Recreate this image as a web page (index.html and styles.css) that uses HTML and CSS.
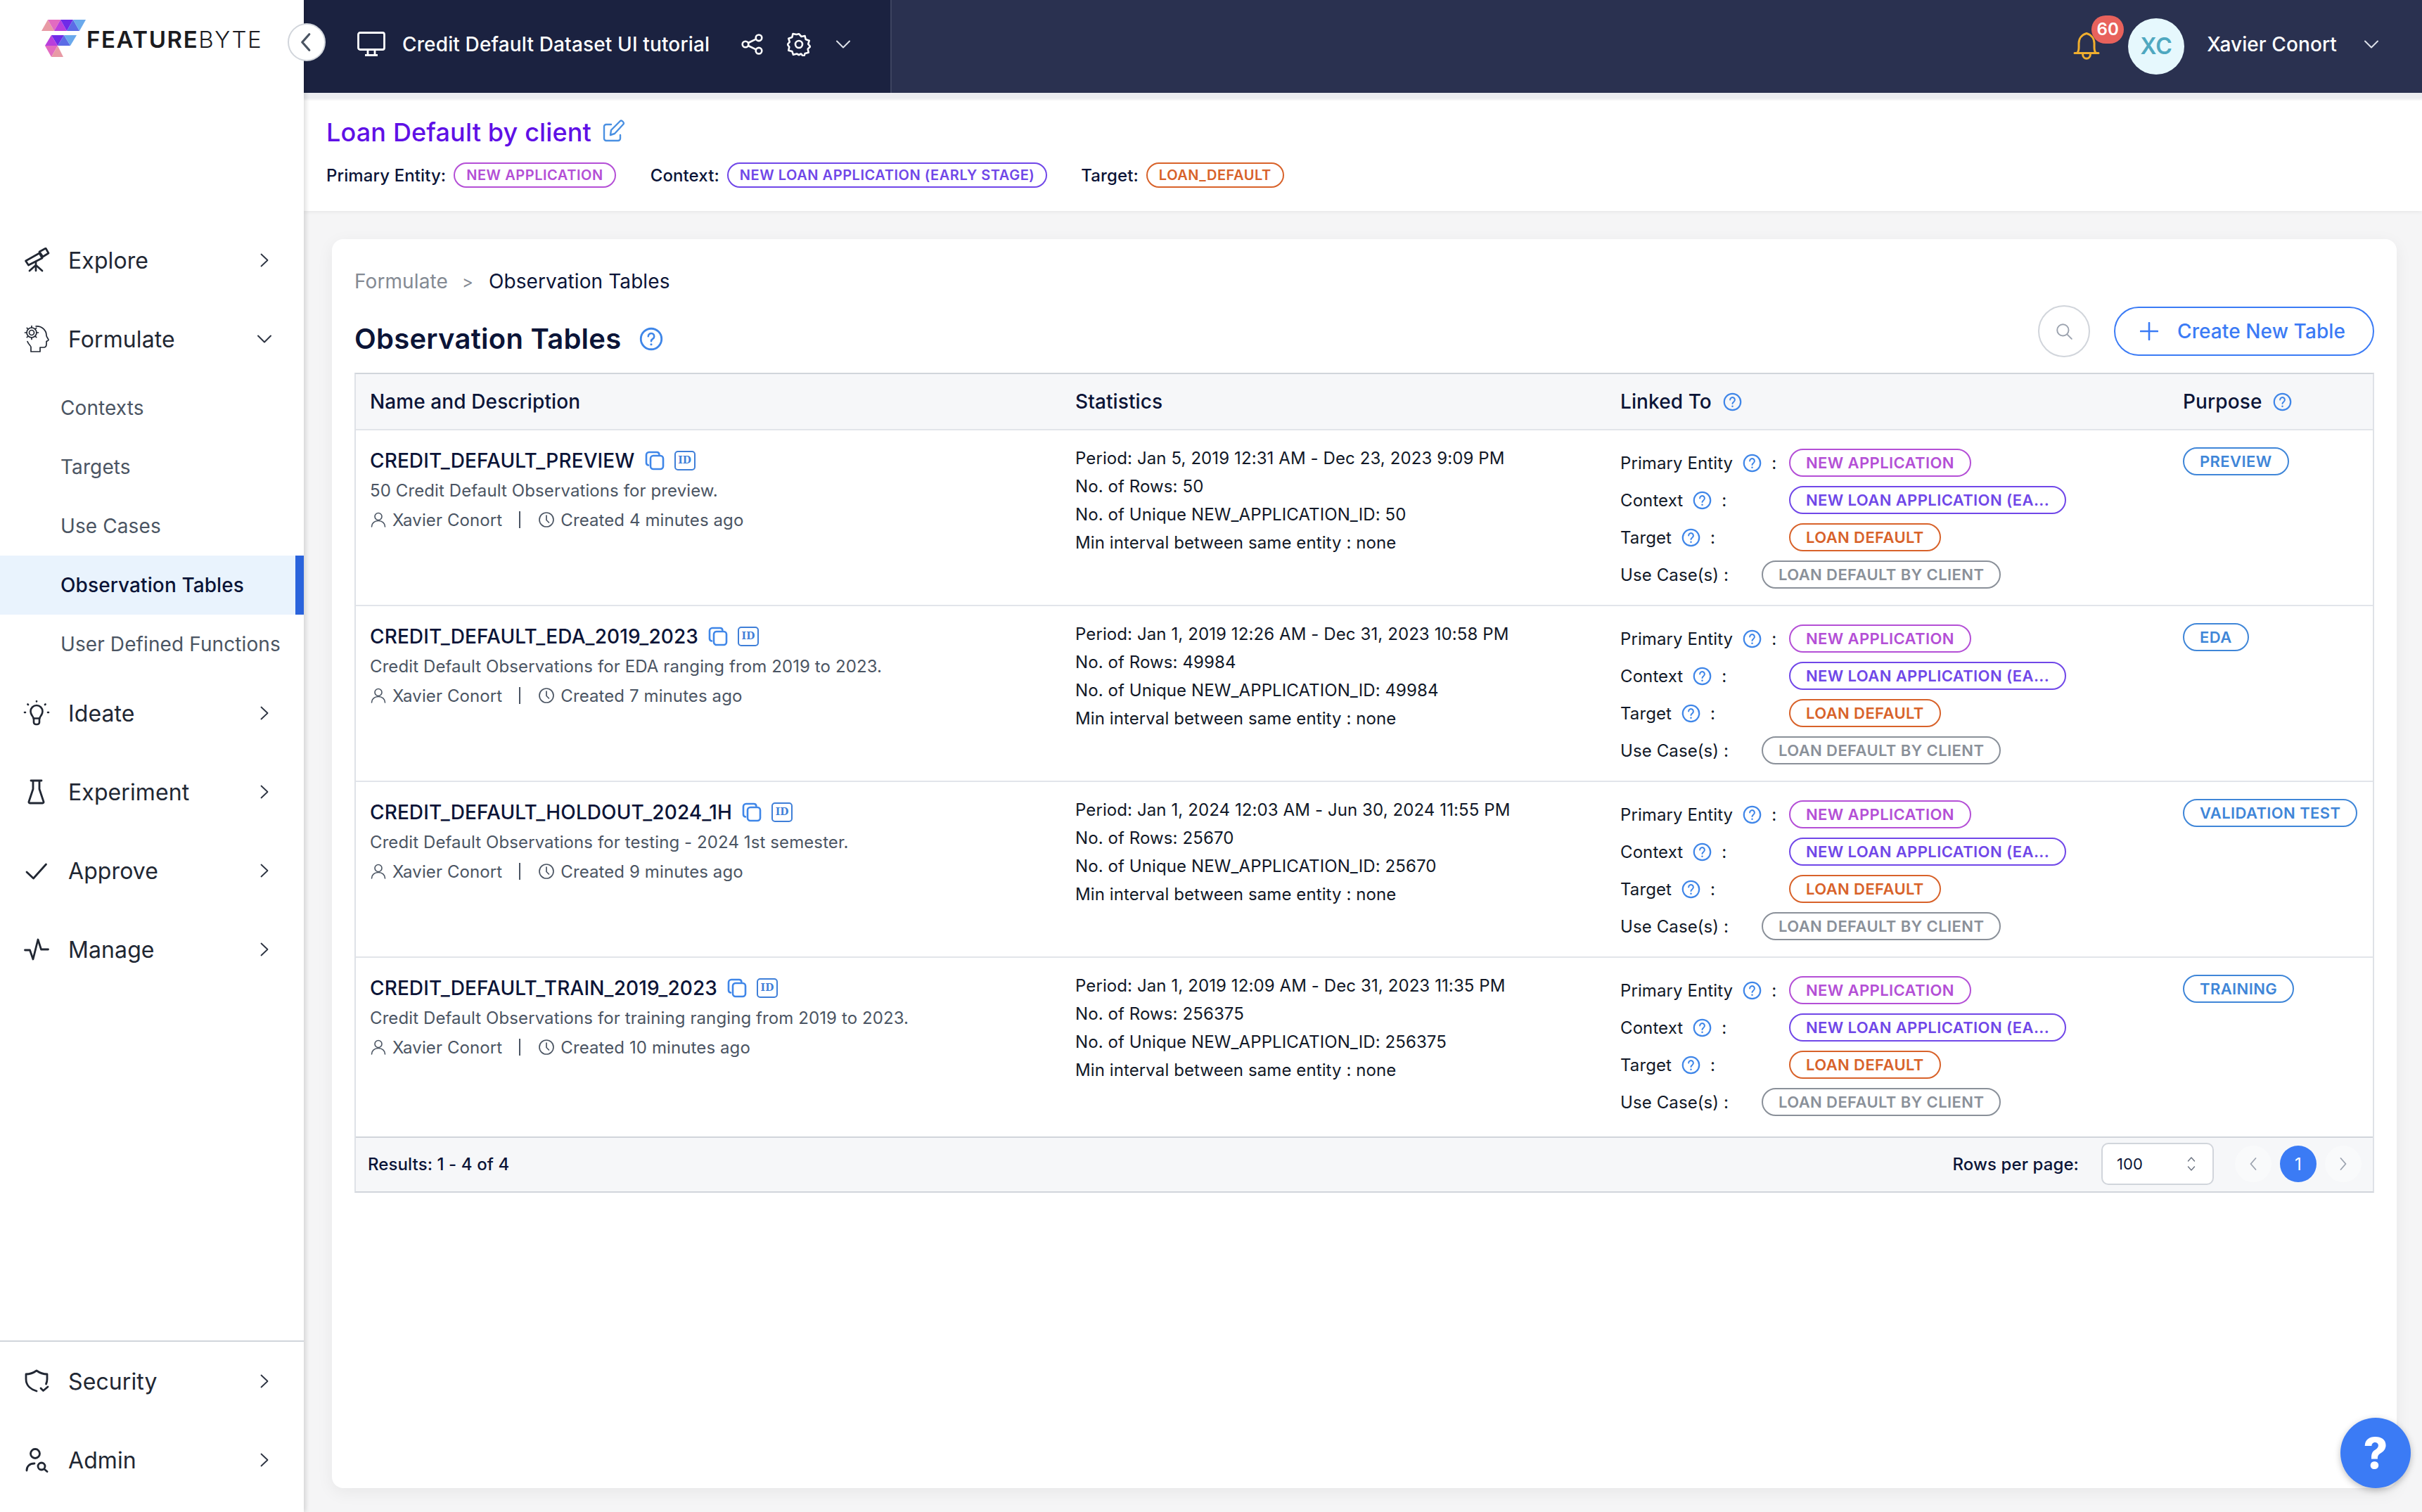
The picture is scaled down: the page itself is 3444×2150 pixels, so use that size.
FILE: index.html
```html
<!DOCTYPE html>
<html lang="en">
<head>
<meta charset="utf-8">
<title>Observation Tables</title>
<link rel="stylesheet" href="styles.css">
</head>
<body>
<svg class="defs" width="0" height="0" aria-hidden="true">
  <symbol id="help" viewBox="0 0 24 24"><circle cx="12" cy="12" r="10.400" fill="none" stroke="currentColor" stroke-width="2"/><path d="M9 9.300a3 3 0 1 1 4.700 2.500c-1 .6-1.700 1.200-1.700 2.500" fill="none" stroke="currentColor" stroke-width="1.800" stroke-linecap="round"/><circle cx="12" cy="17.500" r="1.100" fill="currentColor"/></symbol>
  <symbol id="chev-r" viewBox="0 0 24 24"><path d="M7.500 3.500l9 8.500-9 8.500" fill="none" stroke="currentColor" stroke-width="1.800" stroke-linecap="round" stroke-linejoin="round"/></symbol>
  <symbol id="chev-d" viewBox="0 0 24 24"><path d="M3 7.500l9 9 9-9" fill="none" stroke="currentColor" stroke-width="2" stroke-linecap="round" stroke-linejoin="round"/></symbol>
  <symbol id="copy" viewBox="0 0 28 28"><path d="M5 20.500A3.500 3.500 0 0 1 2 17V6a4 4 0 0 1 4-4h11a3.500 3.500 0 0 1 3.400 3" fill="none" stroke="currentColor" stroke-width="2.600" stroke-linecap="round"/><rect x="8" y="7" width="18" height="19" rx="4" fill="none" stroke="currentColor" stroke-width="2.600"/></symbol>
  <symbol id="user" viewBox="0 0 24 24"><circle cx="12" cy="7.500" r="5" fill="none" stroke="currentColor" stroke-width="1.600"/><path d="M2.500 22c0-5 4-8.500 9.500-8.500s9.500 3.500 9.500 8.500" fill="none" stroke="currentColor" stroke-width="1.600" stroke-linecap="round"/></symbol>
  <symbol id="clock" viewBox="0 0 24 24"><circle cx="12" cy="12" r="10" fill="none" stroke="currentColor" stroke-width="1.700"/><path d="M12 6v6.500l3.500 3.500" fill="none" stroke="currentColor" stroke-width="1.700" stroke-linecap="round"/></symbol>
</svg>

<aside class="sidebar">
  <div class="logo">
    <svg class="logo-mark" viewBox="0 0 90 70" width="90" height="70">
      <polygon points="9,24 18,8 27,24" fill="#e89aa5"/><polygon points="18,8 36,8 27,24" fill="#e26bc0"/><polygon points="27,24 36,8 45,24" fill="#b93fdc"/><polygon points="36,8 54,8 45,24" fill="#6f2be8"/><polygon points="45,24 54,8 63,24" fill="#5b6ce6"/><polygon points="54,8 72,8 63,24" fill="#6aa9ec"/>
      <polygon points="23,30 41,30 32,45" fill="#6f2be8"/><polygon points="14,45 23,30 32,45" fill="#b93fdc"/><polygon points="32,45 41,30 50,45" fill="#5b6ce6"/><polygon points="41,30 59,30 50,45" fill="#6aa9ec"/>
      <polygon points="14,45 32,45 23,61" fill="#e26bc0"/><polygon points="23,61 32,45 40,61" fill="#e89aa5"/>
    </svg>
    <span class="logo-text"><b>FEATURE</b>BYTE</span>
  </div>

  <nav class="nav">
    <a class="nav-item">
      <svg class="nav-icon" viewBox="0 0 36 36"><g fill="none" stroke="currentColor" stroke-width="2.700" stroke-linejoin="round" stroke-linecap="round"><path d="M2.500 19L22 8l4 7L6.500 25z"/><path d="M22 6l9-5 4 7-8 5z"/><path d="M17 20v13M17 25L8 33M17 25l9 8"/></g></svg>
      <span>Explore</span>
      <svg class="nav-chev"><use href="#chev-r"/></svg>
    </a>
    <a class="nav-item">
      <svg class="nav-icon icon-lg" viewBox="0 0 40 40"><g fill="none" stroke="currentColor" stroke-width="1.700" stroke-linejoin="round" stroke-linecap="round"><path d="M19 2c9-.5 15 6 15 13 0 2 3 5 3 6.500 0 1-3 1.500-3 2v4c0 3-2 4.500-4 4.500h-5v6H12v-6.500c0-2-3.500-3.500-5-8"/><circle cx="13" cy="11" r="3.500"/><circle cx="13" cy="11" r="7"/><path d="M13 1.500V4M13 18v2.500M3.500 11H6M20 11h2.500M6.300 4.300L8 6M18 16l1.700 1.700M6.300 17.700L8 16M18 6l1.700-1.700"/></g></svg>
      <span>Formulate</span>
      <svg class="nav-chev"><use href="#chev-d"/></svg>
    </a>
    <a class="sub-item">Contexts</a>
    <a class="sub-item">Targets</a>
    <a class="sub-item">Use Cases</a>
    <a class="sub-item active">Observation Tables</a>
    <a class="sub-item">User Defined Functions</a>
    <a class="nav-item">
      <svg class="nav-icon" viewBox="0 0 36 36"><g fill="none" stroke="currentColor" stroke-width="2.600" stroke-linecap="round" stroke-linejoin="round"><path d="M13.500 25.500c0-3-4-4.500-4-10a8.500 8.500 0 0 1 17 0c0 5.500-4 7-4 10z"/><path d="M14 26v5a3 3 0 0 0 3 3h2a3 3 0 0 0 3-3v-5"/><path d="M18 1v.500M5.500 5.500l.500.500M30.500 5.500l-.500.500M1 17h1M34 17h1"/></g></svg>
      <span>Ideate</span>
      <svg class="nav-chev"><use href="#chev-r"/></svg>
    </a>
    <a class="nav-item">
      <svg class="nav-icon" viewBox="0 0 36 36"><g fill="none" stroke="currentColor" stroke-width="2.800" stroke-linejoin="round" stroke-linecap="round"><path d="M10 2h15M13 2v12L7 32a1.500 1.500 0 0 0 1.500 2h18a1.500 1.500 0 0 0 1.500-2l-6-18V2"/></g></svg>
      <span>Experiment</span>
      <svg class="nav-chev"><use href="#chev-r"/></svg>
    </a>
    <a class="nav-item">
      <svg class="nav-icon" viewBox="0 0 36 36"><path d="M4 20l9.500 9L31.500 9" fill="none" stroke="currentColor" stroke-width="2.800" stroke-linecap="round" stroke-linejoin="round"/></svg>
      <span>Approve</span>
      <svg class="nav-chev"><use href="#chev-r"/></svg>
    </a>
    <a class="nav-item">
      <svg class="nav-icon" viewBox="0 0 36 36"><path d="M1.500 19H8.500L13 32 20 4l4.500 14h10" fill="none" stroke="currentColor" stroke-width="2.800" stroke-linecap="round" stroke-linejoin="round"/></svg>
      <span>Manage</span>
      <svg class="nav-chev"><use href="#chev-r"/></svg>
    </a>
  </nav>

  <div class="nav-bottom">
    <a class="nav-item">
      <svg class="nav-icon" viewBox="0 0 36 36"><g fill="none" stroke="currentColor" stroke-width="2.800" stroke-linecap="round" stroke-linejoin="round"><path d="M18 32c-7-2-15-7-15-17V8c5 0 10-1.500 15-5 5 3.500 10 5 15 5v7c0 2.500-.5 5-1.500 7"/><path d="M24 28l3.500 3.500L34 26"/></g></svg>
      <span>Security</span>
      <svg class="nav-chev"><use href="#chev-r"/></svg>
    </a>
    <a class="nav-item">
      <svg class="nav-icon" viewBox="0 0 36 36"><g fill="none" stroke="currentColor" stroke-width="2.800" stroke-linecap="round"><circle cx="16" cy="9" r="6.500"/><path d="M4 33c0-6 4-10 11-10"/><circle cx="25" cy="27" r="5"/><path d="M29 31l4 3.500"/></g></svg>
      <span>Admin</span>
      <svg class="nav-chev"><use href="#chev-r"/></svg>
    </a>
  </div>
  <button class="collapse"><svg viewBox="0 0 24 24" width="30" height="30"><path d="M15 3L7 12l8 9" fill="none" stroke="#4b5563" stroke-width="2.600" stroke-linecap="round" stroke-linejoin="round"/></svg></button>
</aside>

<div class="main">
  <header class="topbar">
    <div class="top-left">
      <svg class="ic-monitor" viewBox="0 0 40 36" width="40" height="36"><g fill="none" stroke="#fff" stroke-width="2.800" stroke-linejoin="round"><rect x="1.500" y="1.500" width="37" height="24" rx="2.500"/><path d="M15 26v6M25 26v6M11 33.500h18"/></g></svg>
      <span class="top-title">Credit Default Dataset UI tutorial</span>
      <svg class="ic-share" viewBox="0 0 32 30" width="32" height="30"><g fill="none" stroke="#fff" stroke-width="2.600"><circle cx="6" cy="15" r="4.300"/><circle cx="25" cy="5.800" r="4.300"/><circle cx="25" cy="24.200" r="4.300"/><path d="M10 13l11-5.400M10 17l11 5.400"/></g></svg>
      <svg class="ic-gear" viewBox="0 0 34 34" width="34" height="34"><g fill="none" stroke="#fff" stroke-width="2.600" stroke-linejoin="round"><circle cx="17" cy="17" r="5"/><path d="M17 2l3.500 3.800 5-1 1.200 5 5 1.700-1.500 5 3 3.500-3.500 3.500 1 5-5 1.200-1.700 4.800L20 30.300 17 32l-3-1.700-5 1.200-1.700-4.800-5-1.200 1-5L.8 17l3-3.500-1.500-5 5-1.700 1.200-5 5 1z" transform="translate(0 .2)"/></g></svg>
      <svg class="ic-chev" viewBox="0 0 24 24" width="24" height="24"><use href="#chev-d"/></svg>
    </div>
    <div class="top-right">
      <div class="bell">
        <svg viewBox="0 0 38 40" width="38" height="40"><g fill="none" stroke="#f0ae2e" stroke-width="3" stroke-linecap="round" stroke-linejoin="round"><path d="M2 29.500h34M5.500 29.500c2-2 2.500-4 2.500-8v-6C8 9 12 3.500 19 1.500c7 2 11 7.500 11 14v6c0 4 .5 6 2.500 8"/><path d="M13.500 30.500c0 9 11 9 11 0"/></g></svg>
        <span class="badge">60</span>
      </div>
      <div class="avatar">XC</div>
      <span class="top-name">Xavier Conort</span>
      <svg class="ic-chev" viewBox="0 0 24 24" width="24" height="24"><use href="#chev-d"/></svg>
    </div>
  </header>
  <div class="top-shade"></div>

  <section class="subhead">
    <h1 class="use-title">Loan Default by client
      <svg class="ic-edit" viewBox="0 0 32 32" width="32" height="32"><g fill="none" stroke="#4a90e2" stroke-width="2.400" stroke-linecap="round" stroke-linejoin="round"><path d="M12 7H5a3 3 0 0 0-3 3v17a3 3 0 0 0 3 3h17a3 3 0 0 0 3-3v-5"/><path d="M11 22l1-7L25 2c2-1.500 6 2 4.500 4.500L17 20z"/></g></svg>
    </h1>
    <div class="meta-row">
      <span class="meta-label">Primary Entity:</span><span class="chip-sm c-purple">NEW APPLICATION</span>
      <span class="meta-label m2">Context:</span><span class="chip-sm c-violet">NEW LOAN APPLICATION (EARLY STAGE)</span>
      <span class="meta-label m3">Target:</span><span class="chip-sm c-orange">LOAN_DEFAULT</span>
    </div>
  </section>

  <div class="content">
    <section class="card">
      <div class="crumbs"><span class="crumb-muted">Formulate</span><span class="crumb-sep">&gt;</span><span>Observation Tables</span></div>
      <div class="head">
        <h2 class="page-title">Observation Tables <svg class="help-lg"><use href="#help"/></svg></h2>
        <div class="actions">
          <button class="search"><svg viewBox="0 0 24 24" width="26" height="26"><g fill="none" stroke="#9ca3af" stroke-width="1.800" stroke-linecap="round"><circle cx="10.500" cy="10.500" r="7.500"/><path d="M16 16l6 6"/></g></svg></button>
          <button class="create"><svg viewBox="0 0 26 26" width="26" height="26"><path d="M13 1v24M1 13h24" stroke="#3b7bf5" stroke-width="2.600" stroke-linecap="round"/></svg>Create New Table</button>
        </div>
      </div>

      <div class="table">
        <div class="grid thead">
          <div>Name and Description</div>
          <div>Statistics</div>
          <div class="th-help">Linked To <svg class="help"><use href="#help"/></svg></div>
          <div class="th-help">Purpose <svg class="help"><use href="#help"/></svg></div>
        </div>

        <div class="grid row">
          <div class="c-name">
            <div class="name">CREDIT_DEFAULT_PREVIEW <svg class="i-copy"><use href="#copy"/></svg><span class="i-id">ID</span></div>
            <div class="desc">50 Credit Default Observations for preview.</div>
            <div class="by"><svg class="i-sm"><use href="#user"/></svg>Xavier Conort<i class="sep"></i><svg class="i-sm"><use href="#clock"/></svg>Created 4 minutes ago</div>
          </div>
          <div class="c-stats"><div>Period: Jan 5, 2019 12:31 AM - Dec 23, 2023 9:09 PM</div><div>No. of Rows: 50</div><div>No. of Unique NEW_APPLICATION_ID: 50</div><div>Min interval between same entity : none</div></div>
          <div class="c-links">
            <div class="lk"><span class="lb">Primary Entity <svg class="help"><use href="#help"/></svg> :</span><span class="chip c-purple">NEW APPLICATION</span></div>
            <div class="lk"><span class="lb">Context <svg class="help"><use href="#help"/></svg> :</span><span class="chip c-violet">NEW LOAN APPLICATION (EA...</span></div>
            <div class="lk"><span class="lb">Target <svg class="help"><use href="#help"/></svg> :</span><span class="chip c-orange">LOAN DEFAULT</span></div>
            <div class="lk"><span class="lb lb-uc">Use Case(s) :</span><span class="chip c-gray">LOAN DEFAULT BY CLIENT</span></div>
          </div>
          <div class="c-purpose"><span class="chip c-blue">PREVIEW</span></div>
        </div>

        <div class="grid row">
          <div class="c-name">
            <div class="name">CREDIT_DEFAULT_EDA_2019_2023 <svg class="i-copy"><use href="#copy"/></svg><span class="i-id">ID</span></div>
            <div class="desc">Credit Default Observations for EDA ranging from 2019 to 2023.</div>
            <div class="by"><svg class="i-sm"><use href="#user"/></svg>Xavier Conort<i class="sep"></i><svg class="i-sm"><use href="#clock"/></svg>Created 7 minutes ago</div>
          </div>
          <div class="c-stats"><div>Period: Jan 1, 2019 12:26 AM - Dec 31, 2023 10:58 PM</div><div>No. of Rows: 49984</div><div>No. of Unique NEW_APPLICATION_ID: 49984</div><div>Min interval between same entity : none</div></div>
          <div class="c-links">
            <div class="lk"><span class="lb">Primary Entity <svg class="help"><use href="#help"/></svg> :</span><span class="chip c-purple">NEW APPLICATION</span></div>
            <div class="lk"><span class="lb">Context <svg class="help"><use href="#help"/></svg> :</span><span class="chip c-violet">NEW LOAN APPLICATION (EA...</span></div>
            <div class="lk"><span class="lb">Target <svg class="help"><use href="#help"/></svg> :</span><span class="chip c-orange">LOAN DEFAULT</span></div>
            <div class="lk"><span class="lb lb-uc">Use Case(s) :</span><span class="chip c-gray">LOAN DEFAULT BY CLIENT</span></div>
          </div>
          <div class="c-purpose"><span class="chip c-blue">EDA</span></div>
        </div>

        <div class="grid row">
          <div class="c-name">
            <div class="name">CREDIT_DEFAULT_HOLDOUT_2024_1H <svg class="i-copy"><use href="#copy"/></svg><span class="i-id">ID</span></div>
            <div class="desc">Credit Default Observations for testing - 2024 1st semester.</div>
            <div class="by"><svg class="i-sm"><use href="#user"/></svg>Xavier Conort<i class="sep"></i><svg class="i-sm"><use href="#clock"/></svg>Created 9 minutes ago</div>
          </div>
          <div class="c-stats"><div>Period: Jan 1, 2024 12:03 AM - Jun 30, 2024 11:55 PM</div><div>No. of Rows: 25670</div><div>No. of Unique NEW_APPLICATION_ID: 25670</div><div>Min interval between same entity : none</div></div>
          <div class="c-links">
            <div class="lk"><span class="lb">Primary Entity <svg class="help"><use href="#help"/></svg> :</span><span class="chip c-purple">NEW APPLICATION</span></div>
            <div class="lk"><span class="lb">Context <svg class="help"><use href="#help"/></svg> :</span><span class="chip c-violet">NEW LOAN APPLICATION (EA...</span></div>
            <div class="lk"><span class="lb">Target <svg class="help"><use href="#help"/></svg> :</span><span class="chip c-orange">LOAN DEFAULT</span></div>
            <div class="lk"><span class="lb lb-uc">Use Case(s) :</span><span class="chip c-gray">LOAN DEFAULT BY CLIENT</span></div>
          </div>
          <div class="c-purpose"><span class="chip c-blue">VALIDATION TEST</span></div>
        </div>

        <div class="grid row row-last">
          <div class="c-name">
            <div class="name">CREDIT_DEFAULT_TRAIN_2019_2023 <svg class="i-copy"><use href="#copy"/></svg><span class="i-id">ID</span></div>
            <div class="desc">Credit Default Observations for training ranging from 2019 to 2023.</div>
            <div class="by"><svg class="i-sm"><use href="#user"/></svg>Xavier Conort<i class="sep"></i><svg class="i-sm"><use href="#clock"/></svg>Created 10 minutes ago</div>
          </div>
          <div class="c-stats"><div>Period: Jan 1, 2019 12:09 AM - Dec 31, 2023 11:35 PM</div><div>No. of Rows: 256375</div><div>No. of Unique NEW_APPLICATION_ID: 256375</div><div>Min interval between same entity : none</div></div>
          <div class="c-links">
            <div class="lk"><span class="lb">Primary Entity <svg class="help"><use href="#help"/></svg> :</span><span class="chip c-purple">NEW APPLICATION</span></div>
            <div class="lk"><span class="lb">Context <svg class="help"><use href="#help"/></svg> :</span><span class="chip c-violet">NEW LOAN APPLICATION (EA...</span></div>
            <div class="lk"><span class="lb">Target <svg class="help"><use href="#help"/></svg> :</span><span class="chip c-orange">LOAN DEFAULT</span></div>
            <div class="lk"><span class="lb lb-uc">Use Case(s) :</span><span class="chip c-gray">LOAN DEFAULT BY CLIENT</span></div>
          </div>
          <div class="c-purpose"><span class="chip c-blue">TRAINING</span></div>
        </div>

        <div class="tfoot">
          <span class="results">Results: 1 - 4 of 4</span>
          <div class="pager">
            <span class="rpp">Rows per page:</span>
            <div class="select"><span>100</span><svg viewBox="0 0 12 24" width="12" height="24"><path d="M1.500 8L6 3l4.500 5M1.500 16L6 21l4.500-5" fill="none" stroke="#6b7280" stroke-width="1.400" stroke-linecap="round" stroke-linejoin="round"/></svg></div>
            <div class="pg pg-first"><svg viewBox="0 0 12 20" width="12" height="20"><path d="M9.500 2L2.500 10l7 8" fill="none" stroke="#9ca3af" stroke-width="1.800" stroke-linecap="round" stroke-linejoin="round"/></svg></div>
            <div class="pg pg-on">1</div>
            <div class="pg"><svg viewBox="0 0 12 20" width="12" height="20"><path d="M2.500 2l7 8-7 8" fill="none" stroke="#9ca3af" stroke-width="1.800" stroke-linecap="round" stroke-linejoin="round"/></svg></div>
          </div>
        </div>
      </div>
    </section>
  </div>
</div>

<button class="fab">?</button>
</body>
</html>
```

FILE: styles.css
```css
* { box-sizing: border-box; }
html, body { height: 100%; margin: 0; }
body {
  display: flex;
  font-family: Inter, "Liberation Sans", sans-serif;
  color: #0b1437;
  background: #f5f5f6;
  letter-spacing: .1px;
  overflow: hidden;
}
.defs { position: absolute; }
button { font-family: inherit; cursor: pointer; letter-spacing: inherit; }
h1, h2 { margin: 0; }

/* sidebar */
.sidebar {
  position: relative;
  z-index: 3;
  flex: 0 0 432px;
  display: flex;
  flex-direction: column;
  height: 2150px;
  background: #fff;
  box-shadow: 2px 0 7px rgba(0, 0, 0, .16);
}
.logo {
  height: 314px;
  display: flex;
  align-items: flex-start;
  padding: 20px 0 0 50px;
}
.logo-mark { flex: none; }
.logo-text {
  margin: 16px 0 0 -17px;
  font-size: 33px;
  line-height: 40px;
  color: #1b1b1f;
  font-weight: 300;
  letter-spacing: 1.600px;
}
.logo-text b { font-weight: 600; }
.nav { display: flex; flex-direction: column; }
.nav-item {
  height: 112px;
  display: flex;
  align-items: center;
  padding: 0 44px 0 30px;
  font-size: 32px;
  color: #212733;
}
.nav-icon { flex: none; width: 44px; height: 36px; margin-right: 23px; color: #212733; }
.icon-lg { height: 40px; }
.nav-chev { width: 24px; height: 24px; margin-left: auto; color: #2b3240; }
.sub-item {
  height: 84px;
  display: flex;
  align-items: center;
  padding-left: 86px;
  font-size: 28px;
  color: #4b5563;
}
.sub-item.active {
  background: #e9f3fd;
  color: #0b1437;
  font-weight: 500;
  border-right: 12px solid #2a63dc;
}
.nav-bottom { margin-top: auto; border-top: 2px solid #d1d5db; padding-bottom: 18px; }
.collapse {
  position: absolute;
  left: 409px;
  top: 33px;
  width: 54px;
  height: 54px;
  padding: 0;
  display: flex;
  align-items: center;
  justify-content: center;
  border-radius: 50%;
  border: 2px solid #d1d5db;
  background: #fff;
}

/* main */
.main { flex: 1; min-width: 0; height: 2150px; display: flex; flex-direction: column; }
.topbar { flex: 0 0 132px; display: flex; background: #2a3150; color: #fff; }
.top-left {
  flex: 0 0 836px;
  display: flex;
  align-items: center;
  background: #1b2240;
  border-right: 2px solid #3d4460;
  padding: 0 0 6px 76px;
}
.top-title { margin-left: 24px; font-size: 28px; font-weight: 500; letter-spacing: .14px; white-space: nowrap; }
.ic-share { margin-left: 45px; }
.ic-gear { margin-left: 33px; }
.top-left .ic-chev { margin-left: 34px; color: #dfe3ea; }
.ic-chev { display: block; }
.top-right { flex: 1; display: flex; align-items: center; justify-content: flex-end; padding-right: 60px; }
.bell { position: relative; width: 38px; height: 40px; }
.bell svg { display: block; }
.badge {
  position: absolute;
  left: 26px;
  top: -24px;
  width: 46px;
  height: 40px;
  border-radius: 20px;
  background: #e8625c;
  color: #fff;
  font-size: 24px;
  font-weight: 600;
  line-height: 40px;
  text-align: center;
}
.avatar {
  width: 80px;
  height: 80px;
  margin-left: 40px;
  border-radius: 50%;
  background: #e6f8fd;
  color: #4fa8c0;
  font-size: 32px;
  font-weight: 600;
  line-height: 80px;
  text-align: center;
}
.top-name { margin: -6px 0 0 32px; font-size: 28px; font-weight: 500; }
.top-right .ic-chev { margin: -6px 0 0 37px; color: #dfe3ea; }
.top-shade { flex: 0 0 11px; background: linear-gradient(#ebecf0 65%, #fff); }

.subhead {
  position: relative;
  z-index: 1;
  flex: 0 0 157px;
  background: #fff;
  padding: 21px 0 0 32px;
  box-shadow: 0 1px 6px rgba(0, 0, 0, .07);
}
.use-title {
  display: flex;
  align-items: center;
  gap: 16px;
  height: 48px;
  font-size: 36px;
  font-weight: 500;
  letter-spacing: .15px;
  color: #5f10e6;
}
.ic-edit { margin-top: -4px; }
.meta-row { display: flex; align-items: center; margin-top: 19px; }
.meta-label { font-size: 24px; font-weight: 500; color: #0b1437; margin-right: 11px; }
.m2 { margin-left: 49px; }
.m3 { margin-left: 48px; }
.chip-sm {
  height: 36px;
  padding: 0 16px;
  display: inline-flex;
  align-items: center;
  border: 2px solid;
  border-radius: 18px;
  font-size: 20px;
  font-weight: 600;
  letter-spacing: .55px;
  white-space: nowrap;
}
.chip {
  height: 40px;
  padding: 0 22px;
  display: inline-flex;
  align-items: center;
  border: 2px solid;
  border-radius: 20px;
  font-size: 22px;
  font-weight: 600;
  letter-spacing: .4px;
  white-space: nowrap;
}
.c-purple { color: #b44fd6; }
.c-violet { color: #7047e8; }
.c-orange { color: #d8622a; }
.c-gray { color: #8a9099; }
.c-blue { color: #3f86d8; }

.content { flex: 1; min-height: 0; padding: 40px 36px 34px 40px; }
.card {
  height: 100%;
  padding: 40px 32px 0;
  background: #fff;
  border-radius: 16px;
  box-shadow: 0 6px 24px rgba(0, 0, 0, .06);
}
.crumbs { display: flex; align-items: center; height: 40px; font-size: 28px; color: #0b1437; }
.crumb-muted { color: #848a93; }
.crumb-sep { margin: 0 22px 0 20px; font-size: 24px; color: #848a93; }
.head { display: flex; justify-content: space-between; align-items: flex-start; height: 96px; margin-top: 14px; }
.page-title {
  display: flex;
  align-items: center;
  gap: 26px;
  height: 48px;
  margin-top: 24px;
  font-size: 40px;
  font-weight: 600;
  line-height: 48px;
  letter-spacing: .25px;
}
.help-lg { width: 34px; height: 34px; color: #3f86e8; }
.help { width: 27px; height: 27px; color: #3f86e8; flex: none; }
.actions { display: flex; align-items: center; gap: 34px; }
.search {
  width: 74px;
  height: 74px;
  padding: 0;
  display: flex;
  align-items: center;
  justify-content: center;
  border: 2px solid #d1d5db;
  border-radius: 50%;
  background: #fff;
}
.create {
  width: 370px;
  height: 70px;
  display: flex;
  align-items: center;
  gap: 27px;
  padding: 0 0 0 35px;
  border: 2.500px solid #3b7bf5;
  border-radius: 35px;
  background: #fff;
  color: #3b7bf5;
  font-size: 28px;
  font-weight: 500;
  white-space: nowrap;
}

.table { border: 2px solid #d1d5db; border-left-color: #dfe2e7; border-right-color: #dfe2e7; }
.grid { display: grid; grid-template-columns: 1003px 775px 800px 1fr; padding-left: 20px; }
.thead {
  height: 80px;
  align-items: center;
  background: #f6f7f9;
  border-bottom: 2px solid #e2e5ea;
  font-size: 28px;
  font-weight: 500;
}
.th-help { display: flex; align-items: center; gap: 16px; }
.row { height: 250px; border-bottom: 2px solid #e2e5ea; }
.row-last { height: 254px; border-bottom: 0; }
.c-name { padding-top: 22px; }
.name { display: flex; align-items: center; height: 42px; font-size: 28px; font-weight: 500; }
.i-copy { width: 28px; height: 28px; margin-left: 14px; color: #3f86e8; }
.i-id {
  width: 30px;
  height: 28px;
  margin-left: 14px;
  border: 2.500px solid #3f7fd8;
  border-radius: 5px;
  color: #3f7fd8;
  font-family: "DejaVu Serif", serif;
  font-size: 14px;
  font-weight: 700;
  line-height: 23px;
  letter-spacing: 0;
  text-align: center;
}
.desc { height: 42px; padding-top: 1px; line-height: 42px; font-size: 24px; color: #4b5563; }
.by { display: flex; align-items: center; height: 42px; font-size: 24px; color: #4b5563; }
.i-sm { width: 24px; height: 24px; margin-right: 8px; color: #4b5563; }
.sep { width: 2px; height: 24px; margin: 0 25px 0 24px; background: #4b5563; }
.c-stats { padding-top: 20px; font-size: 24px; line-height: 40px; color: #111827; }
.c-links { display: flex; flex-direction: column; gap: 13px; padding-top: 26px; }
.lk { display: flex; align-items: center; height: 40px; }
.lb { display: flex; align-items: center; gap: 14px; width: 240px; font-size: 24px; color: #111827; white-space: nowrap; }
.lb-uc { width: 201px; }
.c-purpose { padding-top: 24px; }

.tfoot {
  height: 78px;
  display: flex;
  align-items: center;
  justify-content: space-between;
  padding: 0 16px 2px 17px;
  background: #f6f7f9;
  border-top: 2px solid #d1d5db;
  font-size: 24px;
  font-weight: 500;
}
.pager { display: flex; align-items: center; }
.rpp { margin-right: 32px; }
.select {
  width: 160px;
  height: 60px;
  display: flex;
  align-items: center;
  justify-content: space-between;
  padding: 0 24px 0 20px;
  border: 2px solid #d1d5db;
  border-radius: 10px;
  background: #fff;
  font-size: 22px;
  font-weight: 400;
}
.pg {
  width: 52px;
  height: 52px;
  margin-left: 12px;
  display: flex;
  align-items: center;
  justify-content: center;
  border-radius: 50%;
  background: #f9fafb;
}
.pg-first { margin-left: 30px; }
.pg-on { background: #3b7bf5; color: #fff; font-size: 24px; font-weight: 400; }

.fab {
  position: fixed;
  right: 16px;
  bottom: 34px;
  z-index: 5;
  width: 100px;
  height: 100px;
  padding: 0;
  border: 0;
  border-radius: 50%;
  background: #3b7bf5;
  color: #fff;
  font-size: 60px;
  font-weight: 800;
  line-height: 100px;
  text-align: center;
  box-shadow: 0 3px 10px rgba(0, 0, 0, .25);
}
```
